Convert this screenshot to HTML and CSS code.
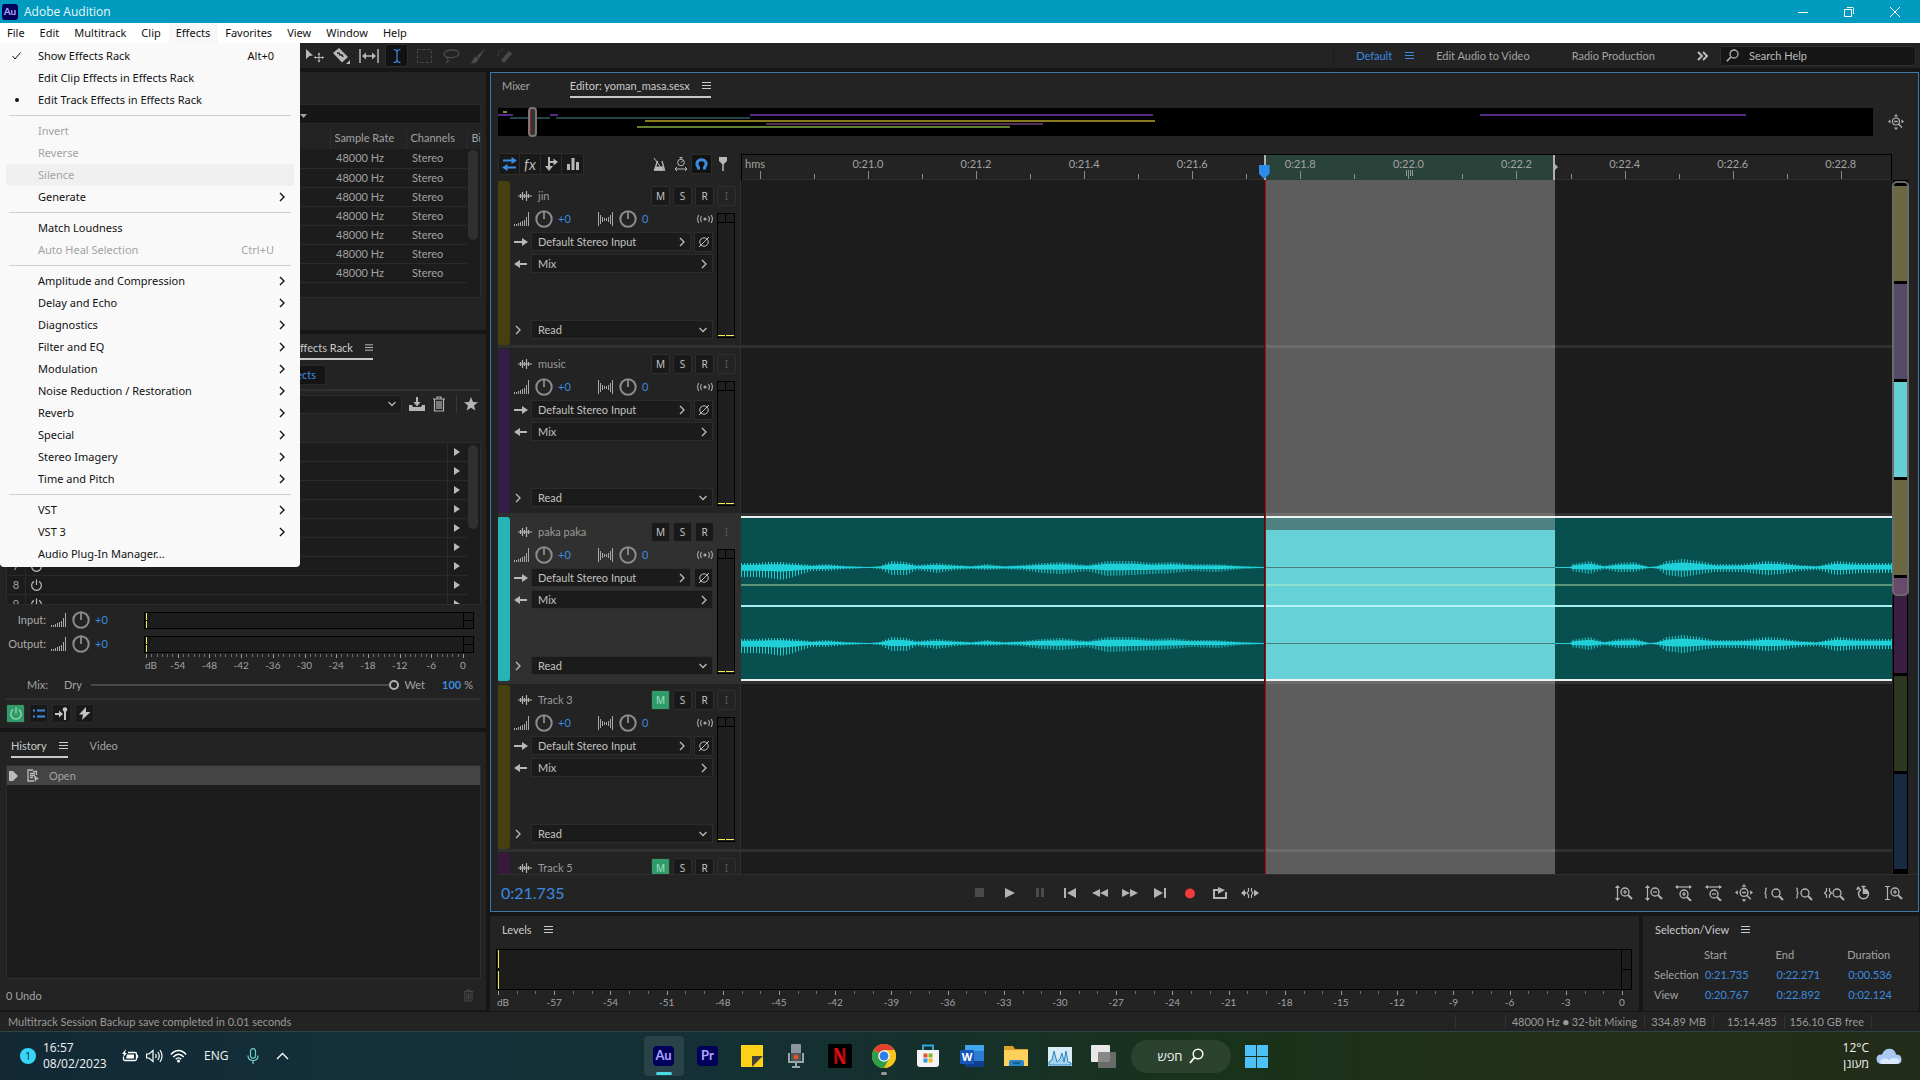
FILE: index.html
```html
<!DOCTYPE html>
<html lang="en">
<head>
<meta charset="utf-8">
<title>Adobe Audition</title>
<link rel="stylesheet" href="styles.css">
</head>
<body>
<svg class="defs" aria-hidden="true">
  <symbol id="burger" viewBox="0 0 9 9"><path d="M0 1.500h9M0 4.500h9M0 7.500h9" stroke="currentColor"/></symbol>
  <symbol id="chev-r" viewBox="0 0 8 10"><path d="M2 1l4 4-4 4" fill="none" stroke="currentColor" stroke-width="1.400"/></symbol>
  <symbol id="chev-d" viewBox="0 0 10 8"><path d="M1.500 2L5 5.500 8.500 2" fill="none" stroke="currentColor" stroke-width="1.300"/></symbol>
  <symbol id="power" viewBox="0 0 16 16"><path d="M5.200 3.600a5.200 5.200 0 1 0 5.600 0M8 1.500v6" fill="none" stroke="currentColor" stroke-width="1.300"/></symbol>
  <symbol id="ramp" viewBox="0 0 16 14"><path d="M.5 14v-2M2.500 14v-2M4.500 14v-3M6.500 14v-4M8.500 14v-5M10.500 14V8M12.500 14V5M14.500 14V0" stroke="currentColor" stroke-width="1"/></symbol>
  <symbol id="knob" viewBox="0 0 18 18"><circle cx="9" cy="9" r="7.700" fill="none" stroke="currentColor" stroke-width="2"/><path d="M9 9V1.500" stroke="currentColor" stroke-width="1.800"/></symbol>
  <symbol id="pan" viewBox="0 0 16 14"><path d="M.5 0v14M2.500 3v9M4.500 5v5M6.500 6v3M8.500 6v3M10.500 5v5M12.500 3v9M14.500 0v14" stroke="currentColor"/></symbol>
  <symbol id="wave" viewBox="0 0 14 10"><path d="M0 5h14M2.500 3v4M4.500 1v8M6.500 3v4M8.500 0v10M10.500 3v4" stroke="currentColor" stroke-width="1.200" fill="none"/></symbol>
  <symbol id="mono" viewBox="0 0 16 10"><circle cx="8" cy="5" r="1.600" fill="currentColor"/><path d="M4.500 2q-1.800 3 0 6M1.800 1q-2.400 4 0 8M11.500 2q1.800 3 0 6M14.200 1q2.400 4 0 8" fill="none" stroke="currentColor" stroke-width="1.100"/></symbol>
  <symbol id="arr-r" viewBox="0 0 14 10"><path d="M0 5h9" stroke="currentColor" stroke-width="2"/><path d="M8 1l6 4-6 4z" fill="currentColor"/></symbol>
  <symbol id="arr-l" viewBox="0 0 14 10"><path d="M5 5h8" stroke="currentColor" stroke-width="2"/><path d="M6 1L0 5l6 4z" fill="currentColor"/></symbol>
  <symbol id="phase" viewBox="0 0 12 12"><circle cx="6" cy="6" r="4.200" fill="none" stroke="currentColor"/><path d="M1 11L11 1" stroke="currentColor"/></symbol>
  <symbol id="trash" viewBox="0 0 14 16"><path d="M1 3h12M5 3V1h4v2M2.500 3v12h9V3M5 5v8M7 5v8M9 5v8" fill="none" stroke="currentColor" stroke-width="1.200"/></symbol>
  <symbol id="zoomall" viewBox="0 0 16 16"><circle cx="8" cy="7.500" r="3.500" fill="none" stroke="currentColor" stroke-width="1.200"/><path d="M6.300 7.500h3.400M10.500 10l3.500 3.500" stroke="currentColor" stroke-width="1.300"/><path d="M6 2.500L8 0l2 2.500zM6 13.500L8 16l2-2.500zM2.500 5.500L0 7.500l2.500 2zM13.500 5.500l2.500 2-2.500 2z" fill="currentColor"/></symbol>
</svg>

<header class="titlebar">
  <span class="app-logo">Au</span><h1>Adobe Audition</h1>
  <div class="win-controls">
    <button aria-label="Minimize"><svg width="10" height="10"><path d="M0 5.500h10" stroke="#fff"/></svg></button>
    <button aria-label="Restore"><svg width="11" height="11"><path d="M.5 3.500h7v7h-7zM3 1.500h5.500q1 0 1 1V8" fill="none" stroke="#fff"/></svg></button>
    <button aria-label="Close"><svg width="10" height="10"><path d="M0 0l10 10M10 0L0 10" stroke="#fff"/></svg></button>
  </div>
</header>
<nav class="menubar" aria-label="Menu bar">
  <button>File</button><button>Edit</button><button>Multitrack</button><button>Clip</button><button class="open">Effects</button><button>Favorites</button><button>View</button><button>Window</button><button>Help</button>
</nav>
<div class="menu" role="menu" id="effects-menu"></div>

<div class="toolbar">
  <div class="tools">
    <button aria-label="Move"><svg width="18" height="14" viewBox="0 0 18 14"><path d="M0 0l7 6.500-3.500.5L0 10z" fill="currentColor"/><path d="M13 4v9M8.500 8.500h9" stroke="currentColor"/><path d="M11.500 5.500L13 3.500l1.500 2zM11.500 11.500l1.500 2 1.500-2zM10 7l-2 1.500 2 1.500zM16 7l2 1.500-2 1.500z" fill="currentColor"/></svg></button>
    <button aria-label="Razor"><svg width="18" height="16" viewBox="0 0 18 16"><path d="M0 5l6-5 9 9-6 5.500z" fill="currentColor"/><path d="M4 5l2 0 1 2 2 0 1 2" stroke="#222" stroke-width="1.500" fill="none"/><path d="M17 12v4h-4z" fill="currentColor"/></svg></button>
    <button aria-label="Slip"><svg width="20" height="16" viewBox="0 0 20 16"><path d="M1 1v14M19 1v14M4 8h12" stroke="currentColor" stroke-width="1.500"/><path d="M7 4.500L3 8l4 3.500zM13 4.500L17 8l-4 3.500z" fill="currentColor"/></svg></button>
    <button class="on" aria-label="Time Selection"><svg width="8" height="16" viewBox="0 0 8 16"><path d="M.5 1.500q3 0 3.500 2 .5-2 3.500-2M4 3v10M.5 14.500q3 0 3.500-2 .5 2 3.500 2" fill="none" stroke="currentColor" stroke-width="1.200"/></svg></button>
    <button class="off" aria-label="Marquee"><svg width="15" height="14" viewBox="0 0 15 14"><path d="M.5.5h14v13H.5z" fill="none" stroke="currentColor" stroke-dasharray="3 2"/></svg></button>
    <button class="off" aria-label="Lasso"><svg width="17" height="14" viewBox="0 0 17 14"><path d="M5 8.500C-2 6.500 1 1 9 1s9 5 3 7-10-2-8 1 1 4-1 4.500" fill="none" stroke="currentColor" stroke-width="1.300"/></svg></button>
    <button class="off" aria-label="Paintbrush"><svg width="16" height="16" viewBox="0 0 16 16"><path d="M15.500 0L7 8l2 2.500zM6.500 8.500l2 2.500c-1 4-5 4.500-8 4.500 2.500-1.500 2-6 6-7z" fill="currentColor"/></svg></button>
    <button class="off" aria-label="Spot Healing"><svg width="16" height="16" viewBox="0 0 16 16"><path d="M4 12l8-9 3 3-8 9z" fill="currentColor"/><path d="M1 8q0-6 6-7" fill="none" stroke="currentColor" stroke-dasharray="2 1.500"/></svg></button>
  </div>
  <nav class="workspaces" aria-label="Workspaces">
    <button class="sel">Default <svg width="9" height="9"><use href="#burger"/></svg></button>
    <button>Edit Audio to Video</button><button>Radio Production</button>
    <button class="more" aria-label="More workspaces"><svg width="11" height="10" viewBox="0 0 11 10"><path d="M1 1l4 4-4 4M6 1l4 4-4 4" fill="none" stroke="#bbb" stroke-width="2"/></svg></button>
  </nav>
  <label class="help"><svg width="13" height="13" viewBox="0 0 13 13"><circle cx="8" cy="5" r="4" fill="none" stroke="currentColor" stroke-width="1.300"/><path d="M5 8L.8 12.200" stroke="currentColor" stroke-width="1.600"/></svg><input type="search" placeholder="Search Help" aria-label="Search Help"></label>
</div>

<main class="workspace">
  <aside class="left">
    <section class="panel files">
      <label class="file-search"><svg width="12" height="10" viewBox="0 0 12 10"><path d="M0 0q4 1 2 5l-2 1" fill="none" stroke="currentColor" stroke-width="1.300"/><path d="M5 5h7L8.500 9z" fill="currentColor"/></svg><input type="search" aria-label="Search files"></label>
      <div class="file-box">
        <table><thead><tr><th class="c-name"></th><th class="c-rate">Sample Rate</th><th class="c-chan">Channels</th><th>Bi</th></tr></thead><tbody id="files"></tbody></table>
        <i class="thumb"></i>
      </div>
    </section>
    <section class="panel rack">
      <div class="tabs"><button class="tab active">Effects Rack <svg width="8" height="9"><use href="#burger"/></svg></button></div>
      <div class="rack-mode"><button>Track Effects</button></div>
      <hr>
      <div class="preset">
        <label class="pick"><select aria-label="Presets"><option></option></select><svg width="10" height="8"><use href="#chev-d"/></svg></label>
        <button aria-label="Save preset"><svg width="16" height="14" viewBox="0 0 16 14"><path d="M0 8h3l1 2h8l1-2h3v6H0z" fill="currentColor"/><path d="M8 0v6" stroke="currentColor" stroke-width="2"/><path d="M4.500 5h7L8 9.500z" fill="currentColor"/></svg></button>
        <button aria-label="Delete preset"><svg width="14" height="16"><use href="#trash"/></svg></button>
        <i class="bar"></i>
        <button aria-label="Favorite"><svg width="14" height="14" viewBox="0 0 14 14"><path d="M7 0l2 5 5 .3-4 3.300 1.400 5L7 10.800 2.600 13.600 4 8.600 0 5.300 5 5z" fill="currentColor"/></svg></button>
      </div>
      <div class="slots"><ol id="slots"></ol><i class="thumb"></i></div>
      <div class="io"><span class="io-label">Input:</span><svg width="16" height="14"><use href="#ramp"/></svg><svg class="knob" width="18" height="18"><use href="#knob"/></svg><a href="#" class="val">+0</a><div class="meter"><i></i></div></div>
      <div class="io"><span class="io-label">Output:</span><svg width="16" height="14"><use href="#ramp"/></svg><svg class="knob" width="18" height="18"><use href="#knob"/></svg><a href="#" class="val">+0</a><div class="meter"><i></i></div></div>
      <div class="scale" id="io-scale"></div>
      <div class="mix"><label for="mix">Mix:</label><span>Dry</span><input id="mix" type="range" value="100"><span>Wet</span><b>100</b><span>%</span></div>
      <hr>
      <div class="rack-buttons">
        <button class="lit" aria-label="Rack power"><svg width="16" height="16"><use href="#power"/></svg></button>
        <button aria-label="List view" class="blue"><svg width="12" height="9" viewBox="0 0 12 9"><path d="M0 1.500h2M4 1.500h8M0 7.500h2M4 7.500h8" stroke="currentColor" stroke-width="2"/></svg></button>
        <button aria-label="Pre-fader"><svg width="13" height="13" viewBox="0 0 13 13"><path d="M0 7h5M10 4v9" stroke="currentColor" stroke-width="2"/><path d="M4 3.500L8 7l-4 3.500z" fill="currentColor"/><circle cx="10" cy="2.500" r="2.300" fill="currentColor"/></svg></button>
        <button aria-label="Pre-render"><svg width="12" height="13" viewBox="0 0 12 13"><path d="M7 0L0 7.500h4L3 13l8.500-8H7z" fill="currentColor"/></svg></button>
      </div>
    </section>
    <section class="panel history">
      <div class="tabs"><button class="tab active">History <svg width="9" height="9"><use href="#burger"/></svg></button><button class="tab">Video</button></div>
      <ul class="history-list"><li><svg width="9" height="10" viewBox="0 0 9 10"><path d="M0 0h4l5 5-5 5H0z" fill="#bbb"/></svg><svg width="13" height="14" viewBox="0 0 13 14"><path d="M1 2.500V1h5M1 1v11h6M9.500 6V2.500H6M3 4.500h5M3 6.500h5M3 8.500h3" stroke="#bbb" stroke-width="1.300" fill="none"/><path d="M7 6l5 4-2.500.5L8 13z" fill="#bbb"/></svg><span>Open</span></li></ul>
      <div class="undo"><span>0 Undo</span><button aria-label="Delete history" disabled><svg width="11" height="13"><use href="#trash"/></svg></button></div>
    </section>
  </aside>

  <div class="right">
    <section class="editor">
      <div class="tabs"><button class="tab">Mixer</button><button class="tab active">Editor: yoman_masa.sesx <svg width="9" height="9"><use href="#burger"/></svg></button></div>
      <div class="overview">
        <svg viewBox="0 0 1375 28" preserveAspectRatio="none">
          <g stroke-width="2"><path d="M0 7h15M52 7h8M252 7h403M982 7h266" stroke="#522c86"/><path d="M5 4h4" stroke="#8a8040"/><path d="M12 10h40M58 10h194" stroke="#25434b"/><path d="M147 13h510" stroke="#8a7a1e"/><path d="M268 16h277" stroke="#582d5c"/><path d="M139 19h373" stroke="#627f38"/></g>
        </svg>
        <i class="view-window"></i>
        <button aria-label="Zoom out full"><svg width="16" height="16"><use href="#zoomall"/></svg></button>
      </div>
      <div class="timeline">
        <div class="track-tools">
          <div class="group">
            <button class="blue" aria-label="Inputs/Outputs"><svg width="15" height="14" viewBox="0 0 15 14"><path d="M1 3.500h10M4 10.500h10" stroke="currentColor" stroke-width="2"/><path d="M9.500 0l5.500 3.500L9.500 7zM5.500 7L0 10.500 5.500 14z" fill="currentColor"/></svg></button>
            <button class="fx">fx</button>
            <button aria-label="Sends"><svg width="13" height="14" viewBox="0 0 13 14"><path d="M4 0v11M4 5h6" stroke="currentColor" stroke-width="2"/><path d="M0 9h8l-4 5zM8.500 1.500L13 5 8.500 8.500z" fill="currentColor"/></svg></button>
            <button aria-label="EQ"><svg width="12" height="12" viewBox="0 0 12 12"><path d="M1.500 6v6M6 0v12M10.500 4v8" stroke="currentColor" stroke-width="3"/></svg></button>
          </div>
          <div class="group plain">
            <button aria-label="Metronome"><svg width="13" height="13" viewBox="0 0 13 13"><path d="M4.500 3L1.500 12h10L9 3" fill="none" stroke="currentColor" stroke-width="1.300"/><path d="M1 0l8 11M3 9h7v3H2z" fill="currentColor" stroke="currentColor"/></svg></button>
            <button aria-label="Stretch"><svg width="14" height="14" viewBox="0 0 14 14"><circle cx="7" cy="5.500" r="3.300" fill="none" stroke="currentColor"/><path d="M7 1v1M5.500 .5h3M7 5.500l2-2M1 12h12M3 10l-2 2 2 2M11 10l2 2-2 2" fill="none" stroke="currentColor"/></svg></button>
            <button class="blue on" aria-label="Snap"><svg width="13" height="12" viewBox="0 0 13 12"><path d="M3.500 11.500V9.500C0 5 3 1.800 6.500 1.800S13 5 9.500 9.500v2" fill="none" stroke="currentColor" stroke-width="3"/></svg></button>
            <button aria-label="Marker"><svg width="8" height="14" viewBox="0 0 8 14"><path d="M0 0h8v4L5 7H3L0 4z" fill="currentColor"/><path d="M4 5v9" stroke="currentColor" stroke-width="1.500"/></svg></button>
          </div>
        </div>
        <div class="ruler" id="ruler"><span class="unit">hms</span><div class="sel-range"><i class="grip"></i></div></div>
        <div class="headers" id="headers"></div>
        <div class="lanes" id="lanes"></div>
        <div class="navigator"><i class="n1"></i><i class="n2"></i><i class="n3"></i><i class="n1"></i><i class="n4"></i><i class="n5"></i><i class="n6"></i><b></b></div>
      </div>
      <div class="transport">
        <output>0:21.735</output>
        <div class="play" id="play"></div>
        <div class="zooms" id="zooms"></div>
      </div>
    </section>
    <div class="bottom">
      <section class="panel levels">
        <div class="tabs"><button class="tab on">Levels <svg width="9" height="9"><use href="#burger"/></svg></button></div>
        <div class="meter"><i></i></div>
        <div class="scale" id="lv-scale"></div>
      </section>
      <section class="panel selview">
        <div class="tabs"><button class="tab on">Selection/View <svg width="9" height="9"><use href="#burger"/></svg></button></div>
        <table><thead><tr><th></th><th>Start</th><th>End</th><th>Duration</th></tr></thead><tbody>
          <tr><th>Selection</th><td>0:21.735</td><td>0:22.271</td><td>0:00.536</td></tr>
          <tr><th>View</th><td>0:20.767</td><td>0:22.892</td><td>0:02.124</td></tr></tbody></table>
      </section>
    </div>
  </div>
</main>

<div class="status"><span class="msg">Multitrack Session Backup save completed in 0.01 seconds</span><span class="s0"></span><span class="s1">48000 Hz ● 32-bit Mixing</span><span class="s2">334.89 MB</span><span class="s3">15:14.485</span><span class="s4">156.10 GB free</span></div>

<footer class="taskbar">
  <div class="tray">
    <span class="badge">1</span>
    <div class="clock"><time>16:57</time><time>08/02/2023</time></div>
    <svg width="17" height="14" viewBox="0 0 17 14"><path d="M6 3.500h7q1.500 0 1.500 1.500v5q0 1.500-1.500 1.500H3Q1.500 11.500 1.500 10V8M15.500 6v3" fill="none" stroke="#fff" stroke-width="1.300"/><path d="M5 5.500h7v4H4zM4 0L0 5h2L1 8.500 5 4H3z" fill="#fff"/></svg>
    <svg width="17" height="14" viewBox="0 0 17 14"><path d="M.6 5v4H3l4 3.500v-11L3 5zM9.500 5q1.500 2 0 4M11.800 3q3 4 0 8M14 1q4 6 0 12" fill="none" stroke="#fff" stroke-width="1.200"/></svg>
    <svg width="17" height="14" viewBox="0 0 17 14"><path d="M.8 5.500q7.700-8 15.400 0M3.200 8q5.300-5.500 10.600 0M5.700 10.300q2.800-3 5.600 0" fill="none" stroke="#fff" stroke-width="1.300"/><circle cx="8.500" cy="12" r="1.500" fill="#fff"/></svg>
    <span class="lang">ENG</span>
    <svg width="12" height="16" viewBox="0 0 12 16"><rect x="3.500" y=".7" width="5" height="9.500" rx="2.500" fill="none" stroke="#6fd0c8" stroke-width="1.200"/><path d="M1 7.500q0 5 5 5t5-5M6 12.500V16" fill="none" stroke="#6fd0c8" stroke-width="1.200"/></svg>
    <svg class="t-up" width="13" height="8" viewBox="0 0 13 8"><path d="M1 7l5.500-5.500L12 7" fill="none" stroke="#fff" stroke-width="1.300"/></svg>
  </div>
  <div class="apps">
    <button class="app cur"><span class="adobe">Au</span></button>
    <button class="app"><span class="adobe">Pr</span></button>
    <button class="app" aria-label="Sticky Notes"><svg width="22" height="22"><path d="M0 0h22v11L11 22H0z" fill="#fcd116"/><path d="M11 22V11h11z" fill="#46423a"/><path d="M11 22L22 11v11z" fill="#fcd116"/></svg></button>
    <button class="app" aria-label="Recorder"><svg width="16" height="24"><rect x="3" width="10" height="19" rx="1" fill="#8b979d"/><path d="M1 9v9h14V9M8 19v4M4 23h8" stroke="#9aa5aa" stroke-width="2" fill="none"/><rect x="3" y="9" width="10" height="8" fill="#4d565b"/><circle cx="8" cy="13" r="2.500" fill="#e0552a"/></svg></button>
    <button class="app" aria-label="Netflix"><svg width="24" height="24"><rect width="24" height="24" rx="2" fill="#000"/><path d="M8 4v16M16 4v16" stroke="#b1060f" stroke-width="3"/><path d="M6.500 4h3.200l7.800 16h-3.200z" fill="#e50914"/></svg></button>
    <button class="app run" aria-label="Chrome"><svg width="24" height="24" viewBox="0 0 24 24"><circle cx="12" cy="12" r="12" fill="#f9c51d"/><path d="M12 12L1.600 6A12 12 0 0 1 22.400 6z" fill="#e2412f"/><path d="M1.600 6A12 12 0 0 0 12 24l5.200-9L12 12z" fill="#2f9e4b"/><path d="M12 6h10.400A12 12 0 0 1 12 24l5.200-9z" fill="#f9c51d"/><circle cx="12" cy="12" r="5.800" fill="#fff"/><circle cx="12" cy="12" r="4.500" fill="#2f7de8"/></svg></button>
    <button class="app" aria-label="Store"><svg width="24" height="24"><path d="M7 6V1.500h10V6" fill="none" stroke="#35a5d8" stroke-width="2"/><path d="M1 6h22v14q0 3-3 3H4q-3 0-3-3z" fill="#f4f4f4"/><path d="M7.500 9.500h4v4h-4z" fill="#e8502a"/><path d="M12.500 9.500h4v4h-4z" fill="#7eb72a"/><path d="M7.500 14.500h4v4h-4z" fill="#2a9be0"/><path d="M12.500 14.500h4v4h-4z" fill="#f7b51c"/></svg></button>
    <button class="app word" aria-label="Word"><svg width="24" height="23"><rect x="5" width="19" height="22" rx="2" fill="#2b7cd3"/><path d="M5 0h19v6H5z" fill="#41a5ee"/><path d="M5 16h19v6H5z" fill="#103f91"/><rect y="5" width="14" height="14" rx="1" fill="#1857b8"/><text x="7" y="16" fill="#fff">W</text></svg></button>
    <button class="app" aria-label="Explorer"><svg width="24" height="22"><path d="M0 1h9l2 3h13v17H0z" fill="#e0a025"/><path d="M0 5h24v16H0z" fill="#fcd05a"/><path d="M5 21v-4q0-2 2-2h11q2 0 2 2v4z" fill="#2a85c8"/><path d="M9 18h7" stroke="#0f4f80" stroke-width="1.500"/></svg></button>
    <button class="app" aria-label="Task Manager"><svg width="24" height="19"><rect width="24" height="19" fill="#d8ecf6"/><path d="M1 15l3-2 2-9 3 11 3-3 2-6 2 9 2-11 2 11 3 1v2H1z" fill="#a5d4f0" stroke="#2c86c4"/></svg></button>
    <button class="app" aria-label="Task View"><svg width="25" height="23"><rect width="19" height="17" rx="1" fill="#e8e8e8"/><rect x="7" y="7" width="18" height="16" rx="1" fill="#777" opacity=".85"/></svg></button>
    <button class="find"><svg width="15" height="16" viewBox="0 0 15 16"><circle cx="9" cy="6" r="4.800" fill="none" stroke="#fff" stroke-width="1.500"/><path d="M5.500 9.500L1 15" stroke="#fff" stroke-width="1.800"/></svg><span lang="he" dir="rtl">חפש</span></button>
    <button class="app" aria-label="Start"><svg width="23" height="23"><path d="M0 0h11v11H0zM12 0h11v11H12zM0 12h11v11H0zM12 12h11v11H12z" fill="#4cc2f8"/></svg></button>
  </div>
  <div class="weather"><div><span>12°C</span><span lang="he" dir="rtl">מעונן</span></div><svg width="26" height="17" viewBox="0 0 26 17"><path d="M6 16Q.5 16 .5 11T6 6.500Q8 .8 13.500.8T20 6.500q5.500 0 5.500 5T20 16z" fill="#a9c8f2"/><path d="M4 13q5-5 9-1 4-4 11 0-1 4-4 4H6q-2 0-2-3z" fill="#dce9fb"/></svg></div>
</footer>
<script src="app.js"></script>
</body>
</html>
```
FILE: styles.css
```css
:root {
  --ui: Lato, "Noto Sans", sans-serif;
  --menu: "Noto Sans", sans-serif;
  --win: "Open Sans", "Noto Sans", sans-serif;
  --bg: #232323;
  --deep: #1c1c1c;
  --gap: #161616;
  --line: #303030;
  --text: #a2a2a2;
  --hi: #cacaca;
  --blue: #3b8be0;
}
* { box-sizing: border-box; }
body { margin: 0; min-height: 100vh; height: 100vh; display: flex; flex-direction: column; overflow: hidden; background: var(--gap); color: var(--text); font: 11px/16px var(--ui); position: relative; }
button, input, select { font: inherit; color: inherit; background: none; border: 0; padding: 0; margin: 0; }
button { display: flex; align-items: center; justify-content: center; white-space: nowrap; }
svg { display: block; flex: none; }
i { display: block; }
a { text-decoration: none; }
.defs { position: absolute; width: 0; height: 0; }
ul, ol { list-style: none; margin: 0; padding: 0; }
table { border-collapse: collapse; }
th { font-weight: 400; text-align: left; padding: 0; }
td { padding: 0; }
hr { border: 0; height: 2px; background: var(--line); margin: 0 5px 0 6px; flex: none; }

.titlebar { flex: none; height: 23px; display: flex; align-items: center; background: #009bbf; color: #e8f8fc; padding-left: 2px; }
.titlebar h1 { font: 12px/20px var(--win); margin: 0 0 0 6px; }
.app-logo { width: 16px; height: 16px; border-radius: 3px; background: #00005b; color: #b3a5ff; font: 700 10px/15px var(--ui); text-align: center; }
.win-controls { margin-left: auto; display: flex; padding-right: 2px; }
.win-controls button { width: 46px; height: 20px; }
.menubar { flex: none; height: 20px; display: flex; background: #fff; color: #111; font: 11px/20px var(--menu); }
.menubar button { padding: 0 8px 0 7px; height: 20px; }
.menubar .open { background: #f7f7f7; }
.menu { position: absolute; z-index: 5; top: 43px; left: 0; width: 300px; padding: 2px 0; background: #f9f9f9; border-radius: 0 0 4px 4px; color: #111; font: 11px/22px var(--menu); }
.menu button { display: grid; grid-template-columns: 32px 1fr auto; width: 288px; height: 22px; margin-left: 6px; padding-right: 8px; text-align: left; border-radius: 3px; }
.menu button kbd { font: inherit; padding-right: 12px; }
.menu button:disabled { color: #a3a3a3; }
.menu .hover { background: #f0f0f0; }
.menu hr { height: 1px; background: #cfcfcf; margin: 4px 9px; }
.menu .mark { padding-left: 6px; }

.toolbar { flex: none; height: 25px; display: flex; align-items: center; background: var(--bg); }
.tools { display: flex; margin-left: 302px; color: #b8b8b8; gap: 1px; }
.tools button { width: 26px; height: 23px; }
.tools .on { width: 23px; margin: 0 2px; background: #101214; color: var(--blue); border: 1px solid #2c2c2c; border-radius: 2px; }
.tools .off { color: #4a4a4a; }
.workspaces { margin-left: auto; height: 25px; display: flex; border-left: 1px solid #1c1c1c; padding-left: 22px; }
.workspaces button { margin-right: 42px; }
.workspaces .sel { color: var(--blue); gap: 13px; margin-right: 22px; }
.workspaces .more { margin-right: 0; }
.help { width: 196px; height: 20px; margin: 0 4px 0 12px; display: flex; align-items: center; gap: 10px; padding-left: 5px; background: #161616; border: 1px solid #2e2e2e; border-radius: 2px; color: #b0b0b0; }
.help input { width: 100%; min-width: 0; }
input { outline: 0; }
input::placeholder { color: #bcbcbc; opacity: 1; }

.workspace { flex: 1; min-height: 0; display: grid; grid-template-columns: 486px minmax(0, 1fr); gap: 4px; padding: 4px 1px 2px 0; }
.left, .right { display: flex; flex-direction: column; gap: 4px; min-height: 0; }
.panel { background: var(--bg); }
.files { height: 258px; padding: 32px 5px 0 6px; }
.file-search { display: flex; align-items: center; height: 20px; padding-left: 288px; background: #161616; border: 1px solid #2a2a2a; }
.file-search input { width: 100%; min-width: 0; }
.file-box { position: relative; height: 168px; margin-top: 6px; border: 1px solid #2c2c2c; border-top: 0; background: linear-gradient(var(--bg) 19px, var(--deep) 19px); overflow: hidden; }
.file-box table { width: 100%; table-layout: fixed; }
.file-box tr { height: 19px; }
.file-box th { padding: 0 0 3px 4px; line-height: 14px; border-right: 1px solid #2c2c2c; white-space: nowrap; }
.file-box th:last-child { border: 0; }
.file-box tbody td { padding-left: 6px; border-bottom: 1px solid #2a2a2a; }
.c-name { width: 323px; } .c-rate { width: 76px; } .c-chan { width: 61px; }
.thumb { position: absolute; right: 2px; top: 20px; width: 10px; height: 90px; border-radius: 5px; background: #303030; }

.tabs { display: flex; height: 26px; padding: 1px 11px 0; gap: 22px; flex: none; }
.tab { height: 25px; border-bottom: 2px solid transparent; gap: 12px; padding-top: 2px; }
.tab.active { border-color: #c8c8c8; color: var(--hi); }
.tab.on { color: var(--hi); }
.rack { height: 394px; display: flex; flex-direction: column; }
.rack .tabs { padding-left: 294px; }
.rack-mode { display: flex; height: 29px; padding: 5px 0 4px 240px; }
.rack-mode button { width: 86px; justify-content: flex-end; padding-right: 9px; background: #141414; border: 1px solid #2a2a2a; color: var(--blue); }
.preset { display: flex; align-items: center; height: 22px; margin-top: 2px; padding: 0 8px 0 6px; gap: 7px; color: #b4b4b4; }
.preset .pick { flex: 1; height: 19px; }
.preset .bar { width: 1px; height: 18px; background: #383838; margin: 0 0 0 3px; }
.slots { position: relative; height: 163px; margin: 27px 5px 0 6px; border: 1px solid #2c2c2c; background: var(--deep); overflow: hidden; flex: none; }
.slots .thumb { top: 2px; height: 84px; }
.slots li { display: grid; grid-template-columns: 19px 20px 1fr 20px; height: 19px; margin-right: 12px; border-bottom: 1px solid #2a2a2a; align-items: center; }
.slots li span { text-align: center; border-right: 1px solid #2a2a2a; height: 18px; line-height: 18px; }
.slots li svg { margin: auto; color: #bbb; }
.slots li i { margin-left: 6px; border: solid transparent; border-width: 4px 0 4px 6px; border-left-color: #b8b8b8; }
.io { display: flex; align-items: center; height: 24px; gap: 5px; padding-right: 12px; color: #aaa; flex: none; }
.slots + .io { margin-top: 3px; }
.io-label { width: 46px; text-align: right; }
.val { color: var(--blue); }
.knob { color: #8c8c8c; }
.io .val { width: 44px; }
.meter { position: relative; flex: 1; height: 17px; border: 1px solid #000; background: var(--deep); padding-left: 1px; }
.meter i { width: 1px; height: 100%; background: linear-gradient(#f0ea4a 47%, #000 47% 53%, #f0ea4a 53%); }
.meter::after { content: ""; position: absolute; top: 0; right: 0; bottom: 0; width: 9px; border-left: 1px solid #000; background: linear-gradient(#000, #000) center/100% 1px no-repeat; }
.scale { position: relative; height: 20px; margin: -2px 23px 0 146px; font-size: 10px; flex: none; }
.scale b { position: absolute; top: 0; width: 1px; height: 3px; background: #6c6c6c; }
.scale b.maj { height: 4px; background: #9a9a9a; }
.scale span { position: absolute; top: 5px; transform: translateX(-50%); line-height: 12px; }
.scale span:first-of-type { transform: none; margin-left: -1px; }
.mix { display: flex; align-items: center; height: 20px; padding: 0 13px 0 27px; margin: 1px 0 3px; flex: none; }
.mix label { width: 37px; } .mix span + input { margin-left: 9px; }
.mix input { flex: 1; min-width: 0; appearance: none; height: 10px; margin-right: 6px; }
.mix input::-webkit-slider-runnable-track { height: 2px; background: #484848; }
.mix input::-webkit-slider-thumb { appearance: none; width: 10px; height: 10px; margin-top: -4px; border: 2px solid #b0b0b0; border-radius: 50%; background: var(--bg); }
.mix b { color: var(--blue); margin: 0 3px 0 17px; }
.rack-buttons { display: flex; gap: 4px; padding: 4px 6px 0; color: #c4c4c4; }
.rack-buttons button { width: 19px; height: 19px; background: #191919; border: 1px solid #2a2a2a; border-radius: 2px; }
.rack-buttons .lit { background: #2f9c69; color: #9ad8b4; }
.blue, .rack-buttons .blue { color: var(--blue); }
.history { flex: 1; min-height: 0; display: flex; flex-direction: column; }
.history-list { flex: 1; margin: 7px 5px 0 6px; border: 1px solid #2e2e2e; background: var(--deep); }
.history-list li { display: flex; align-items: center; height: 19px; padding-left: 2px; gap: 9px; background: #444; }
.undo { display: flex; justify-content: space-between; align-items: center; height: 31px; padding: 2px 12px 0 6px; }
.undo button { color: #4a4a4a; }

.editor { flex: 1; min-height: 0; display: flex; flex-direction: column; border: 1px solid #3c78a8; background: var(--bg); padding-left: 7px; }
.editor .tabs { padding: 0 4px; gap: 40px; height: 25px; }
.overview { position: relative; display: flex; height: 28px; margin: 10px 0 17px; align-items: center; }
.overview > svg { flex: 1; width: 0; height: 28px; background: #000; }
.overview button { width: 45px; color: #b4b4b4; }
.view-window { position: absolute; left: 30px; top: -1px; width: 9px; height: 30px; border: 2px solid #777; border-radius: 4px; background: linear-gradient(90deg, #a02020 1px, #333 1px); }
.timeline { flex: 1; min-height: 0; display: grid; grid-template: 27px minmax(0, 1fr) / 243px minmax(0, 1fr) 26px; overflow: hidden; border-bottom: 1px solid #2e2e2e; }
.track-tools { display: flex; justify-content: space-between; padding-right: 7px; color: #b8b8b8; }
.group { display: flex; height: 22px; background: #191919; border: 1px solid #2c2c2c; border-radius: 2px; }
.group button { width: 21px; border-right: 1px solid #2c2c2c; }
.group button:last-child { border: 0; }
.group.plain { background: none; border-color: transparent; }
.group.plain button { border: 0; }
.group.plain .on { background: #121212; border: 1px solid #2c2c2c; }
.fx { font: italic 15px/18px var(--ui); }
.ruler { position: relative; border: 1px solid #000; border-width: 1px 1px 0; margin-top: 1px; box-shadow: inset 0 -1px #2e2e2e; }
.ruler .unit { position: absolute; left: 3px; top: 1px; }
.ruler b { position: absolute; bottom: 1px; width: 1px; height: 5px; background: #8a8a8a; z-index: 1; }
.ruler b.maj { height: 8px; }
.ruler span { position: absolute; top: 1px; transform: translateX(-50%); z-index: 1; }
.ruler .unit { transform: none; }
.sel-range { position: absolute; left: 45.400%; width: 25.400%; top: 0; bottom: 0; background: #29423a; border-right: 2px solid #b0b0b0; border-left: 2px solid #b0b0b0; }
.sel-range::before { content: ""; position: absolute; left: -7px; bottom: 1px; width: 11px; height: 14px; background: #2e8ceb; clip-path: polygon(0 0, 100% 0, 100% 60%, 50% 100%, 0 60%); z-index: 2; }
.sel-range::after { content: ""; position: absolute; right: -5px; top: 8px; border: solid transparent; border-width: 4px 0 4px 4px; border-left-color: #b0b0b0; }
.grip { position: absolute; left: 50%; top: 15px; width: 7px; height: 6px; margin-left: -4px; background: repeating-linear-gradient(90deg, #999 0 1px, transparent 1px 2px); }
.headers { grid-column: 1; overflow: hidden; border-right: 1px solid #303030; margin-left: -1px; }
.track { position: relative; display: grid; grid-template-columns: 13px 1fr; height: 168px; border-bottom: 3px solid #303030; }
.track.sel { background: #303030; }
.chip { border-radius: 3px; margin-top: 1px; }
.track-body { display: grid; grid-template-columns: 1fr 18px; column-gap: 4px; padding: 6px 5px 0 4px; align-content: start; min-width: 0; }
.t-name { grid-column: 1 / -1; display: flex; align-items: center; height: 20px; gap: 3px; margin-right: -1px; color: #b4b4b4; }
.t-name .name { flex: 1; padding-left: 3px; color: #9a9a9a; }
.t-name > svg { margin-left: 4px; }
.t-name button, .phase { width: 19px; height: 20px; background: #191919; border: 1px solid #2e2e2e; border-radius: 2px; font: 10px/16px "Noto Sans", sans-serif; color: #c4c4c4; }
.t-name button.muted { background: #2f9c69; color: #a8dcc0; }
.t-name button:disabled { color: #555; background: none; }
.t-main { display: flex; flex-direction: column; }
.row { display: flex; align-items: center; height: 19px; margin-bottom: 3px; gap: 3px; color: #b8b8b8; }
.row > svg:first-child { width: 14px; }
.row.knobs { height: 24px; margin: 1px 0 1px; gap: 5px; color: #a8a8a8; }
.row.knobs > svg:first-child { width: 16px; }
.knobs .val { width: 35px; }
.knobs .val + svg + svg + .val { flex: 1; }
.row.auto { margin-top: 44px; }
.row.auto > svg:first-child { width: 8px; margin-right: 6px; }
.pick { display: grid; flex: 1; height: 19px; background: #1b1b1b; border: 1px solid #2c2c2c; min-width: 0; align-items: center; }
.pick > * { grid-area: 1 / 1; }
.pick select { appearance: none; width: 100%; height: 17px; padding-left: 6px; color: #c2c2c2; outline: 0; }
.pick svg { justify-self: end; margin-right: 4px; pointer-events: none; }
.v-meter { height: 125px; margin-top: 7px; border: 1px solid #000; background: linear-gradient(#000, #000) 0 8px/100% 1px no-repeat, linear-gradient(90deg, #f4ee50 7px, #000 7px 8px, #f4ee50 8px) 0 121px/100% 1px no-repeat, linear-gradient(#000, #000) 7px 0/1px 8px no-repeat, #1f1f1f; }
.lanes { position: relative; background: var(--deep); overflow: hidden; }
.lane { height: 168px; border-bottom: 3px solid #303030; }
.clip { display: block; width: 100%; height: 165px; background: #07504f; }
.sel-area { position: absolute; left: 45.500%; width: 25.200%; top: 0; bottom: 0; background: rgba(255, 255, 255, .29); border-left: 1px solid #8a1c1c; box-shadow: -1px 0 #4a0c0c; }
.sel-clip { position: absolute; left: 45.600%; width: 25.100%; top: 350px; height: 149px; background: linear-gradient(#4c7c80, #4c7c80) 0 37px/100% 1px no-repeat, linear-gradient(#8fe0cc, #8fe0cc) 0 54px/100% 2px no-repeat, linear-gradient(#b4f4fa, #b4f4fa) 0 75px/100% 2px no-repeat, linear-gradient(#4c7c80, #4c7c80) 0 113px/100% 1px no-repeat, #66d2d8; }
.navigator { position: relative; width: 15px; margin-left: 1px; padding-top: 6px; display: flex; flex-direction: column; gap: 3px; background: #000; }
.navigator i { flex: 0 0 95px; margin: 0 1px; }
.n1 { background: #6b6740; } .n2 { background: #574a68; } .n3 { background: #66cfd4; } .n4 { background: linear-gradient(#674a6c 17px, #3a1d42 17px); } .n5 { background: #2c3822; } .n6 { background: #172a42; }
.navigator b { position: absolute; left: -1px; right: -1px; top: 1px; height: 415px; border: 2px solid #6a6a6a; border-radius: 5px; }
.transport { height: 36px; flex: none; display: grid; grid-template-columns: 464px 1fr auto; align-items: center; padding: 0 9px 0 3px; color: #b4b4b4; }
.transport output { font: 16px/24px var(--ui); color: var(--blue); }
.play, .zooms { display: flex; }
.play button, .zooms button { width: 30px; height: 24px; }
.play button:disabled { color: #4a4a4a; }

.bottom { height: 94px; display: grid; grid-template-columns: minmax(0, 1fr) 276px; gap: 4px; }
.levels { padding: 0 7px 0 6px; }
.levels .tabs { padding: 1px 6px 0; height: 33px; align-items: start; }
.levels .meter { height: 41px; }
.levels .scale { margin: 1px 10px 0 2px; height: 20px; }
.selview .tabs { padding: 1px 12px 0; align-items: start; }
.selview table { margin: 3px 0 0 11px; }
.selview th:first-child { width: 50px; }
.selview td, .selview th { width: 72px; height: 20px; }
.selview td { color: var(--blue); padding-left: 1px; }
.status { flex: none; height: 20px; display: flex; align-items: center; background: var(--bg); border-bottom: 1px solid #2f4147; color: #9a9a9a; padding: 0 48px 0 8px; }
.status span { border-left: 1px solid #333; line-height: 14px; text-align: right; padding-right: 7px; white-space: nowrap; }
.status .msg { flex: 1; border: 0; text-align: left; }
.s0 { width: 50px; height: 14px; } .s1 { width: 139px; } .s2 { width: 69px; } .s3 { width: 71px; } .status .s4 { width: 88px; border-right: 1px solid #333; }

.taskbar { flex: none; height: 48px; display: grid; grid-template-columns: 1fr auto 1fr; align-items: center; background: linear-gradient(90deg, #122935 0, #13303a 20%, #143032 42%, #193219 65%, #242e18 82%, #222c18); color: #f2f2f2; font: 12px/16px var(--win); }
.tray { display: flex; align-items: center; gap: 7px; padding-left: 20px; }
.badge { width: 16px; height: 16px; border-radius: 50%; background: #35d7f5; color: #123; font-size: 10px; text-align: center; }
.clock { display: flex; flex-direction: column; width: 72px; }
.lang { margin-left: 10px; width: 36px; }
.t-up { margin-left: 10px; }
.apps { display: flex; align-items: center; }
.app { position: relative; width: 40px; height: 40px; margin: 0 2px; border-radius: 4px; }
.app.cur { background: rgba(255, 255, 255, .09); }
.app.cur::after { content: ""; position: absolute; bottom: 1px; left: 12px; width: 16px; height: 3px; border-radius: 2px; background: #4cd9e8; }
.app.run::after { content: ""; position: absolute; bottom: 1px; left: 17px; width: 6px; height: 3px; border-radius: 2px; background: #999; }
.adobe { width: 21px; height: 20px; border-radius: 4px; background: #00005b; color: #b0a6ff; font: 700 13px/19px var(--ui); text-align: center; }
.word text { font: 700 11px var(--win); text-anchor: middle; }
.find { width: 100px; height: 33px; margin: 0 4px 0 5px; border-radius: 17px; background: rgba(255, 255, 255, .08); flex-direction: row-reverse; gap: 6px; font-size: 13px; }
.weather { display: flex; justify-content: flex-end; align-items: center; gap: 7px; padding-right: 18px; }
.weather div { display: flex; flex-direction: column; text-align: right; }
.weather div span { direction: ltr; }
```
FILE: app.js
```js
const $ = id => document.getElementById(id);
const use = (id, w, h, c = '') => `<svg class="${c}" width="${w}" height="${h}"><use href="#${id}"/></svg>`;

// Effects menu: "-" separator, ">" submenu, "!" disabled
const menu = [
  ['Show Effects Rack', 'Alt+0', 'check'], ['Edit Clip Effects in Effects Rack'], ['Edit Track Effects in Effects Rack', '', 'dot'], '-',
  ['Invert', '!'], ['Reverse', '!'], ['Silence', '!', 'hover'], ['Generate', '>'], '-',
  ['Match Loudness'], ['Auto Heal Selection', '!Ctrl+U'], '-',
  ...['Amplitude and Compression', 'Delay and Echo', 'Diagnostics', 'Filter and EQ', 'Modulation', 'Noise Reduction / Restoration', 'Reverb', 'Special', 'Stereo Imagery', 'Time and Pitch'].map(t => [t, '>']), '-',
  ['VST', '>'], ['VST 3', '>'], ['Audio Plug-In Manager...']
];
const marks = {
  check: '<svg width="9" height="8"><path d="M.5 4l2.500 3L8.500.5" fill="none" stroke="#111"/></svg>',
  dot: '<svg width="9" height="8"><circle cx="5" cy="4" r="2" fill="#111"/></svg>'
};
$('effects-menu').innerHTML = menu.map(m => {
  if (m === '-') return '<hr>';
  const [t, k = '', x] = m, off = k[0] === '!';
  const tail = k === '>' ? use('chev-r', 8, 10) : `<kbd>${off ? k.slice(1) : k}</kbd>`;
  return `<button role="menuitem" ${off ? 'disabled' : ''} class="${x === 'hover' ? 'hover' : ''}"><span class="mark">${marks[x] || ''}</span><span>${t}</span>${tail}</button>`;
}).join('');

$('files').innerHTML = '<tr><td></td><td>48000 Hz</td><td>Stereo</td></tr>'.repeat(7);
$('slots').innerHTML = [1, 2, 3, 4, 5, 6, 7, 8, 9].map(n => `<li><span>${n}</span>${use('power', 15, 15)}<span></span><i></i></li>`).join('');

// Horizontal dB scale with minor ticks between the labels
const scale = (id, labels, minor) => {
  const n = labels.length - 1;
  let h = '';
  for (let k = 0; k <= n * minor; k++) h += `<b class="${k % minor ? '' : 'maj'}" style="left:${k / (n * minor) * 100}%"></b>`;
  labels.forEach((t, k) => { h += `<span style="left:${k / n * 100}%">${t}</span>`; });
  $(id).innerHTML = h;
};
scale('io-scale', ['dB', -54, -48, -42, -36, -30, -24, -18, -12, -6, 0], 6);
scale('lv-scale', ['dB', ...Array.from({ length: 20 }, (_, k) => k * 3 - 57)], 3);

// Time ruler
let ticks = '';
for (let k = 0; k < 21; k++) {
  const left = 1.55 + 4.704 * k;
  ticks += `<b class="${k % 2 ? '' : 'maj'}" style="left:${left}%"></b>`;
  if (k && k % 2 === 0) ticks += `<span style="left:${left}%">0:${(20.8 + k / 10).toFixed(1)}</span>`;
}
$('ruler').insertAdjacentHTML('beforeend', ticks);

// Tracks; the last one only has room for its name row
const tracks = [['jin', '#46400f'], ['music', '#341d48'], ['paka paka', '#26b4b8', 'sel'], ['Track 3', '#46400f', '', 1], ['Track 5', '#3a1a3c', '', 1]];
const pick = (label, text, icon, w, h) => `<label class="pick"><select aria-label="${label}"><option>${text}</option></select>${use(icon, w, h)}</label>`;
const controls = `<div class="t-main">
    <div class="row knobs">${use('ramp', 16, 14)}${use('knob', 18, 18, 'knob')}<a href="#" class="val">+0</a>${use('pan', 16, 14)}${use('knob', 18, 18, 'knob')}<a href="#" class="val">0</a>${use('mono', 16, 10)}</div>
    <div class="row">${use('arr-r', 14, 10)}${pick('Input', 'Default Stereo Input', 'chev-r', 8, 10)}<button class="phase" aria-label="Phase">${use('phase', 12, 12)}</button></div>
    <div class="row">${use('arr-l', 14, 10)}${pick('Output', 'Mix', 'chev-r', 8, 10)}</div>
    <div class="row auto">${use('chev-r', 8, 10)}${pick('Automation', 'Read', 'chev-d', 10, 8)}</div>
  </div><i class="v-meter"></i>`;
$('headers').innerHTML = tracks.map(([name, color, cls = '', muted], n) => `
<div class="track ${cls}"><i class="chip" style="background:${color}"></i><div class="track-body">
  <div class="t-name">${use('wave', 14, 10)}<span class="name">${name}</span><button class="${muted ? 'muted' : ''}">M</button><button>S</button><button>R</button><button disabled>I</button></div>
  ${n < 4 ? controls : ''}</div></div>`).join('');

// Waveform envelope: x, up, down
const env = [[0, 4, 9], [15, 4, 9], [28, 5, 10], [40, 5, 12], [52, 4, 9], [70, 2, 3], [85, 3, 3], [105, 1, 1], [128, 0, 0], [138, 1, 1], [150, 6, 7], [165, 5, 7], [175, 2, 2], [195, 4, 5], [215, 2, 2], [230, 1, 1], [245, 3, 2], [262, 1, 1], [280, 2, 2], [300, 4, 5], [320, 5, 6], [345, 2, 3], [365, 6, 8], [390, 6, 7], [410, 4, 6], [430, 5, 5], [450, 3, 3], [475, 3, 4], [500, 1, 1], [524, 0, 0], [828, 0, 0], [830, 3, 3], [848, 6, 6], [862, 1, 1], [875, 4, 4], [892, 5, 4], [907, 0, 0], [915, 1, 1], [924, 6, 7], [940, 8, 9], [958, 6, 6], [972, 3, 4], [1000, 3, 4], [1024, 6, 7], [1040, 5, 6], [1058, 2, 3], [1075, 1, 2], [1094, 6, 7], [1118, 4, 5], [1150, 4, 5]];
const wave = cy => {
  let d = '', s = 0;
  for (let x = 0; x < 1150; x += 1) {
    while (x >= env[s + 1][0]) s++;
    const [x0, u0, d0] = env[s], [x1, u1, d1] = env[s + 1], f = (x - x0) / (x1 - x0);
    const k = x % 3 === 0;
    d += `M${x + .5} ${(cy - .5 - (u0 + (u1 - u0) * f) * (k ? 1 : .55)).toFixed(1)}V${(cy + .5 + (d0 + (d1 - d0) * f) * (k ? 1 : .3)).toFixed(1)}`;
  }
  return `<path d="${d}" stroke="#20d0d8"/>`;
};
const clip = `<svg class="clip" viewBox="0 0 1150 165" preserveAspectRatio="none">${wave(51.5)}${wave(127.5)}
<path d="M0 69h1150" stroke="#5c9478" stroke-width="2"/><path d="M0 90h1150" stroke="#a4f0f4" stroke-width="2"/><path d="M0 1h1150M0 164h1150" stroke="#e8f0ee" stroke-width="2"/></svg>`;
$('lanes').innerHTML = tracks.map(t => `<div class="lane">${t[2] ? clip : ''}</div>`).join('') + '<i class="sel-area"></i><i class="sel-clip"></i>';

const icon = (label, body, w = 18, off) => `<button aria-label="${label}" ${off ? 'disabled' : ''}><svg width="${w}" height="16" viewBox="0 0 ${w} 16">${body}</svg></button>`;
const f = d => `<path d="${d}" fill="currentColor"/>`;
const s = (d, w = 1.2) => `<path d="${d}" fill="none" stroke="currentColor" stroke-width="${w}"/>`;
$('play').innerHTML = [
  icon('Stop', f('M4 3h9v9H4z'), 18, 1), icon('Play', f('M4 3l10 5-10 5z')), icon('Pause', f('M5 3h3v9H5zM10 3h3v9h-3z'), 18, 1),
  icon('To previous', f('M3 3h2v10H3zM15 3v10L6 8z')), icon('Rewind', f('M9 4v8L1 8zM17 4v8L9 8z')), icon('Forward', f('M1 4v8l8-4zM9 4v8l8-4z')),
  icon('To next', f('M3 3v10l9-5zM13 3h2v10h-2z')), '<button aria-label="Record"><svg width="12" height="16"><circle cx="6" cy="8.500" r="5" fill="#f23c3c"/></svg></button>',
  icon('Loop', s('M7 5H3v8h12V7', 2) + f('M7 2l7 3-7 4z')), icon('Skip selection', s('M1 8h4M13 8h3', 2) + s('M7.500 3v3l-1.500 2 1.500 2v3M10.500 3v3l1.500 2-1.500 2v3', 1.200) + f('M4 4.500L0 8l4 3.500zM13 4.500l5 3.500-5 3.500z'))
].join('');
const lens = (x, y, sign = '') => `<circle cx="${x}" cy="${y}" r="4" fill="none" stroke="currentColor" stroke-width="1.3"/>` + s(`M${x + 3} ${y + 3}l4 4`, 2) + (sign ? s(`M${x - 2} ${y}h4` + (sign === '+' ? `M${x} ${y - 2}v4` : '')) : '');
const vbar = s('M2.500 1v14') + f('M0 3l2.500-3L5 3zM0 13l2.500 3L5 13z'), hbar = s('M1 2h15') + f('M3 0L0 2l3 2zM14 0l3 2-3 2z');
$('zooms').innerHTML = [
  icon('Zoom in amplitude', vbar + lens(10, 7, '+')), icon('Zoom out amplitude', vbar + lens(10, 7, '-')),
  icon('Zoom in time', hbar + lens(9, 9, '+')), icon('Zoom out time', hbar + lens(9, 9, '-')),
  `<button aria-label="Zoom out full">${use('zoomall', 18, 18)}</button>`,
  icon('Zoom in point', s('M3 3q-2 0-1 3l-1 2 1 2q-1 3 1 3') + lens(12, 8), 20), icon('Zoom out point', s('M1 3q2 0 1 3l1 2-1 2q1 3-1 3') + lens(10, 8)),
  icon('Zoom to selection', s('M3.500 3v3l-2 2 2 2v3M6.500 3v3l2 2-2 2v3') + lens(14, 8), 22),
  icon('Zoom timing', s('M6 4.500a5 5 0 1 0 5 0M8.500 9V2M6.500 1.500h4', 1.500) + f('M1 5l2-4 2.500 3zM8.500 9V3.500q4 0 5 5.500z')),
  icon('Zoom track', s('M0 1.500h5M2.500 1v14M0 14.500h5') + lens(10, 7, '+'))
].join('');
```
